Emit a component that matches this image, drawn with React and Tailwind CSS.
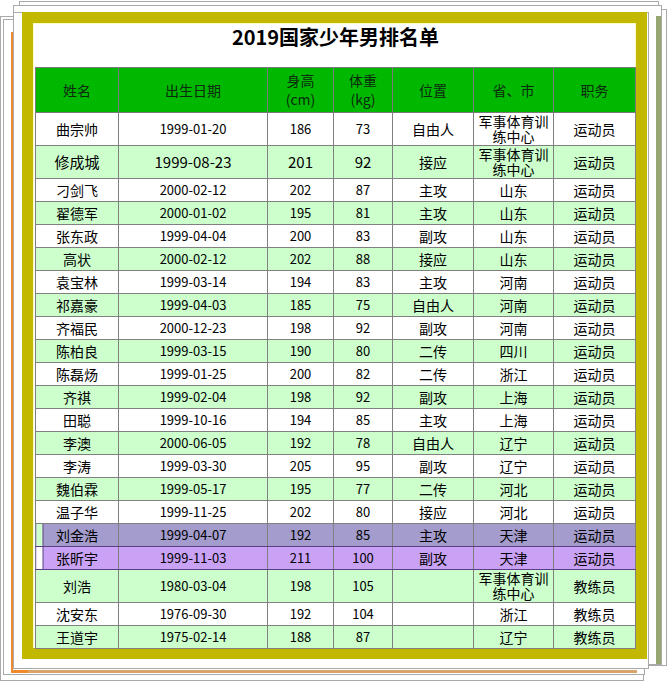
import React from 'react';

const players = [
  ['曲宗帅', '1999-01-20', '186', '73', '自由人', '军事体育训练中心', '运动员'],
  ['修成城', '1999-08-23', '201', '92', '接应', '军事体育训练中心', '运动员'],
  ['刁剑飞', '2000-02-12', '202', '87', '主攻', '山东', '运动员'],
  ['翟德军', '2000-01-02', '195', '81', '主攻', '山东', '运动员'],
  ['张东政', '1999-04-04', '200', '83', '副攻', '山东', '运动员'],
  ['高状', '2000-02-12', '202', '88', '接应', '山东', '运动员'],
  ['袁宝林', '1999-03-14', '194', '83', '主攻', '河南', '运动员'],
  ['祁嘉豪', '1999-04-03', '185', '75', '自由人', '河南', '运动员'],
  ['齐福民', '2000-12-23', '198', '92', '副攻', '河南', '运动员'],
  ['陈柏良', '1999-03-15', '190', '80', '二传', '四川', '运动员'],
  ['陈磊炀', '1999-01-25', '200', '82', '二传', '浙江', '运动员'],
  ['齐祺', '1999-02-04', '198', '92', '副攻', '上海', '运动员'],
  ['田聪', '1999-10-16', '194', '85', '主攻', '上海', '运动员'],
  ['李澳', '2000-06-05', '192', '78', '自由人', '辽宁', '运动员'],
  ['李涛', '1999-03-30', '205', '95', '副攻', '辽宁', '运动员'],
  ['魏伯霖', '1999-05-17', '195', '77', '二传', '河北', '运动员'],
  ['温子华', '1999-11-25', '202', '80', '接应', '河北', '运动员'],
  ['刘金浩', '1999-04-07', '192', '85', '主攻', '天津', '运动员'],
  ['张昕宇', '1999-11-03', '211', '100', '副攻', '天津', '运动员'],
  ['刘浩', '1980-03-04', '198', '105', '', '军事体育训练中心', '教练员'],
  ['沈安东', '1976-09-30', '192', '104', '', '浙江', '教练员'],
  ['王道宇', '1975-02-14', '188', '87', '', '辽宁', '教练员'],
];

const widths = [83, 149, 66, 59, 81, 80, 82];

// selected rows drawn like a highlight over the table
const highlight = {
  17: { row: 'bg-[#a49ccc]', first: 'bg-[linear-gradient(to_right,#ccffcc_6px,#5b3d86_6px,#5b3d86_7px,#a49ccc_7px)]' },
  18: { row: 'bg-[#c9a2f6]', first: 'bg-[linear-gradient(to_right,#ffffff_6px,#5b3d86_6px,#5b3d86_7px,#c9a2f6_7px)]' },
};

export default function App() {
  return (
    <div
      className="relative w-[668px] h-[681px] overflow-hidden bg-white text-black"
      style={{ fontFamily: '"Noto Sans CJK SC", "Noto Sans", sans-serif' }}
    >
      {/* stacked paper sheets behind the card */}
      <div className="absolute left-[19px] top-[1px] w-[640px] h-[400px] border border-[#a9a9a9] bg-white" />
      <div className="absolute left-0 top-[16px] w-[644px] h-[665px] border border-[#a9a9a9] bg-white" />
      <div className="absolute left-[3px] top-[19px] w-[642px] h-[656px] border border-[#a9a9a9] bg-white" />
      <div className="absolute left-[560px] top-[9px] w-[107px] h-[657px] border border-[#a9a9a9] bg-white" />
      <div className="absolute left-[13px] top-[5px] w-[649px] h-[660px] border border-[#a9a9a9] bg-white">
        <div className="absolute right-0 top-[10px] bottom-0 w-[5px] bg-[#97a672]" />
      </div>
      <div className="absolute left-[11px] top-[32px] w-[626px] h-[641px] border-l-2 border-b-[3px] border-l-[#f08b2b] border-b-[#daa36c]">
        <div className="absolute left-[-2px] bottom-[-3px] w-[17px] h-[3px] bg-[#f08b2b]" />
      </div>
      <div className="absolute left-[13px] top-[12px] w-[636px] h-[657px] border border-[#a9a9a9] bg-white" />

      <div className="relative pl-[22px] pt-[12px]">
        <div className="w-[625px] h-[647px] border-[11px] border-[#c2b800] bg-white">
          <div className="h-full pl-[2px] shadow-[inset_0_0_0_1px_#fffbc8]">
            <div className="h-[44px] text-center text-[20px] font-bold leading-[28px]">
              2019国家少年男排名单
            </div>
            <table className="w-[600px] table-fixed border-collapse border border-[#404040] text-center">
              <colgroup>
                {widths.map((w, i) => (
                  <col key={i} style={{ width: w }} />
                ))}
              </colgroup>
              <thead>
                <tr className="h-[45px] bg-[#00b800] text-[14px] leading-[19px] text-[#0d2a0d]">
                  <th className="border border-[#7a7a7a] font-normal">姓名</th>
                  <th className="border border-[#7a7a7a] font-normal">出生日期</th>
                  <th className="border border-[#7a7a7a] font-normal">身高<br />(cm)</th>
                  <th className="border border-[#7a7a7a] font-normal">体重<br />(kg)</th>
                  <th className="border border-[#7a7a7a] font-normal">位置</th>
                  <th className="border border-[#7a7a7a] font-normal">省、市</th>
                  <th className="border border-[#7a7a7a] font-normal">职务</th>
                </tr>
              </thead>
              <tbody>
                {players.map((p, i) => {
                  const hl = highlight[i];
                  const tall = p[5].length > 4;
                  const big = i === 1;
                  const rowBg = hl ? hl.row : i % 2 ? 'bg-[#ccffcc]' : 'bg-white';
                  const line = hl ? 'border-x-[#808080] border-y-[#5b3d86]' : 'border-[#808080]';
                  const num = big ? 'text-[15px]' : 'text-[13px]';
                  return (
                    <tr key={i} className={`${tall ? 'h-[33px]' : 'h-[23px]'} ${rowBg} leading-[20px]`}>
                      <td className={`border ${line} ${big ? 'text-[15px]' : 'text-[14px]'} ${hl ? hl.first : ''}`}>{p[0]}</td>
                      <td className={`border ${line} ${num}`}>{p[1]}</td>
                      <td className={`border ${line} ${num}`}>{p[2]}</td>
                      <td className={`border ${line} ${num}`}>{p[3]}</td>
                      <td className={`border ${line} text-[14px]`}>{p[4]}</td>
                      <td className={`border ${line} text-[14px]`}>
                        {tall ? <div className="mx-auto w-[72px] leading-[15px]">{p[5]}</div> : p[5]}
                      </td>
                      <td className={`border ${line} text-[14px]`}>{p[6]}</td>
                    </tr>
                  );
                })}
              </tbody>
            </table>
          </div>
        </div>
      </div>
    </div>
  );
}
